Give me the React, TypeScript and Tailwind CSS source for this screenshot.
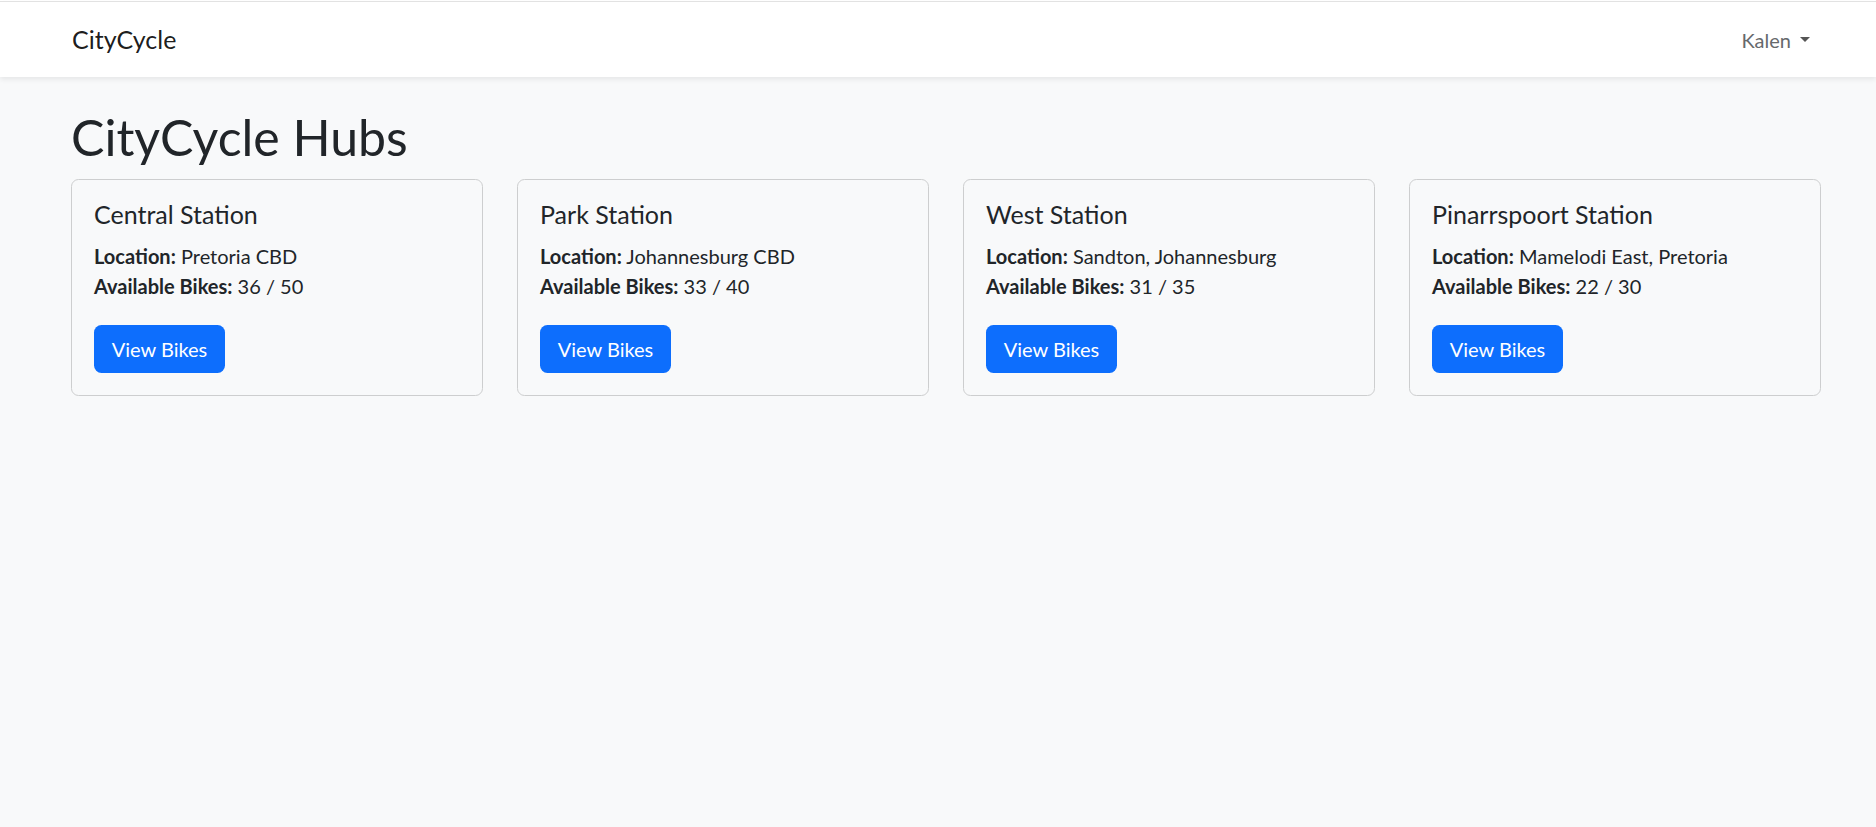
import React from "react";

const hubs = [
  { name: "Central Station", location: "Pretoria CBD", avail: 36, total: 50 },
  { name: "Park Station", location: "Johannesburg CBD", avail: 33, total: 40 },
  { name: "West Station", location: "Sandton, Johannesburg", avail: 31, total: 35 },
  { name: "Pinarrspoort Station", location: "Mamelodi East, Pretoria", avail: 22, total: 30 },
];

export default function App() {
  return (
    <div className="min-h-[827px] bg-[#f8f9fa] font-['Lato',sans-serif] text-[#212529]">
      <div className="h-px bg-white" />
      <nav className="h-[76px] border-t border-[#e2e2e2] bg-white shadow-[0_2.5px_5px_rgba(0,0,0,0.075)] flex items-center justify-between pl-[72px] pr-[66px]">
        <span className="text-[25px] leading-[37.5px] text-[rgba(0,0,0,0.9)]">CityCycle</span>
        <div className="flex items-center text-[20px] leading-[30px] text-[#66696c]">
          <span>Kalen</span>
          <span className="ml-[9px] w-0 h-0 border-t-[5px] border-t-[#555] border-x-[5px] border-x-transparent" />
        </div>
      </nav>
      <main className="pl-[71px] pr-[55px]">
        <h1 className="mt-[30px] mb-[12px] text-[50px] leading-[60px] font-normal">CityCycle Hubs</h1>
        <div className="grid grid-cols-4 gap-[34px]">
          {hubs.map((h) => (
            <div
              key={h.name}
              className="h-[217px] border border-[#cdcecf] rounded-[7.5px] bg-[#f8f9fa] pl-[22px] pr-[20px] pt-[19px] pb-[22px]"
            >
              <h5 className="text-[25px] leading-[30px] mb-[12px]">{h.name}</h5>
              <p className="text-[20px] leading-[30px]">
                <span className="font-bold">Location:</span> {h.location}
              </p>
              <p className="text-[20px] leading-[30px] mb-[24px]">
                <span className="font-bold">Available Bikes:</span> {h.avail} / {h.total}
              </p>
              <button className="h-[48px] w-[131px] rounded-[7.5px] bg-[#0d6efd] text-white text-[20px] leading-[30px] text-center">
                View Bikes
              </button>
            </div>
          ))}
        </div>
      </main>
    </div>
  );
}
